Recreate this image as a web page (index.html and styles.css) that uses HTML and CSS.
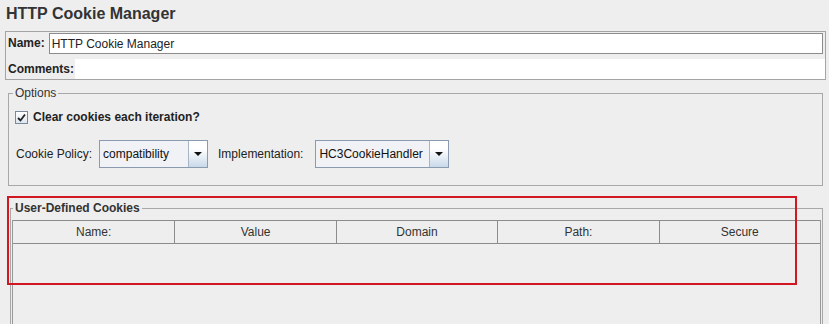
FILE: index.html
```html
<!DOCTYPE html>
<html lang="en">

<head>
  <meta charset="UTF-8">
  <meta name="viewport" content="width=device-width, initial-scale=1.0">
  <title>HTTP Cookie Manager</title>
  <link rel="stylesheet" href="styles.css">
</head>

<body>
  <h1 class="title">HTTP Cookie Manager</h1>

  <div class="name-panel">
    <div class="row">
      <label class="bold-label" for="name">Name:</label>
      <input type="text" id="name" class="name-input" value="HTTP Cookie Manager">
    </div>
    <div class="row comments-row">
      <label class="bold-label" for="comments">Comments:</label>
      <div id="comments" class="comments-field"></div>
    </div>
  </div>

  <fieldset class="group options">
    <legend>Options</legend>
    <label class="check">
      <span class="check-box">
        <svg width="9" height="9" viewBox="0 0 9 9">
          <path d="M1 5 L3.5 7.5 L8 1.5" fill="none" stroke="#222" stroke-width="1.8" />
        </svg>
      </span>
      Clear cookies each iteration?
    </label>

    <div class="combo-row">
      <span class="plain-label">Cookie Policy:</span>
      <div class="combo policy">
        <span class="combo-text">compatibility</span>
        <span class="combo-arrow"></span>
      </div>
      <span class="plain-label impl-label">Implementation:</span>
      <div class="combo impl">
        <span class="combo-text">HC3CookieHandler</span>
        <span class="combo-arrow"></span>
      </div>
    </div>
  </fieldset>

  <fieldset class="group cookies">
    <legend class="bold-legend">User-Defined Cookies</legend>
    <div class="cookie-table">
      <div class="table-head">
        <div class="th">Name:</div>
        <div class="th">Value</div>
        <div class="th">Domain</div>
        <div class="th">Path:</div>
        <div class="th">Secure</div>
      </div>
      <div class="table-body"></div>
    </div>
  </fieldset>

  <!-- red annotation box -->
  <div class="highlight"></div>
</body>

</html>
```

FILE: styles.css
```css
body {
  font-family: "Liberation Sans", Arial, sans-serif;
  font-size: 12px;
  color: #222;
  background-color: #eeeeee;
  margin: 0;
  padding: 0;
  height: 324px;
  overflow: hidden;
  position: relative;
}

.title {
  margin: 0;
  padding: 4px 6px 7px;
  font-size: 16px;
  line-height: 20px;
  font-weight: bold;
  color: #333;
}

.name-panel {
  margin: 0 3px 0 5px;
  border: 1px solid #a4a4a4;
}

.row {
  display: flex;
  align-items: center;
}

.bold-label {
  font-weight: bold;
  padding-left: 2px;
}

.name-input {
  flex: 1;
  height: 21px;
  box-sizing: border-box;
  margin: 1px 2px 0 4px;
  padding: 0 2px;
  border: 1px solid #8c8c8c;
  background: #fff;
  font-family: inherit;
  font-size: 12px;
  color: #222;
  outline: none;
}

.comments-row {
  margin-top: 5px;
}

.comments-field {
  flex: 1;
  height: 20px;
  background: #fff;
  margin-left: 1px;
}

.group {
  border: 1px solid #a8a8a8;
  padding: 0 0 0 4px;
  min-width: 0;
}

.group legend {
  padding: 0 2px;
  line-height: 14px;
  color: #333;
}

.bold-legend {
  font-weight: bold;
}

.options {
  margin: 6px 6px 0 8px;
  padding-bottom: 17px;
}

.check {
  display: flex;
  align-items: center;
  gap: 5px;
  margin: 10px 0 0 2px;
  font-weight: bold;
}

.check-box {
  width: 11px;
  height: 11px;
  border: 1px solid #7a8a99;
  background: linear-gradient(#ffffff, #dce6f0);
  display: flex;
  align-items: center;
  justify-content: center;
}

.combo-row {
  display: flex;
  align-items: center;
  margin: 16px 0 0 3px;
}

.plain-label {
  margin-right: 7px;
}

.impl-label {
  margin-right: 12px;
}

.combo {
  display: flex;
  height: 28px;
  box-sizing: border-box;
  border: 1px solid #8a9bb0;
  background: #f0f2f5;
  margin-right: 10px;
}

.policy {
  width: 109px;
}

.impl {
  width: 134px;
}

.combo-text {
  flex: 1;
  padding-left: 3px;
  line-height: 26px;
  color: #111;
}

.combo-arrow {
  width: 18px;
  border-left: 1px solid #a6b4c4;
  background: linear-gradient(#ffffff 30%, #c9d9ea);
  position: relative;
}

.combo-arrow::after {
  content: "";
  position: absolute;
  left: 5px;
  top: 11px;
  border-left: 4px solid transparent;
  border-right: 4px solid transparent;
  border-top: 4px solid #111;
}

.cookies {
  margin: 15px 6px 0 10px;
  padding: 0;
  height: 200px;
}

.cookies legend {
  margin-left: 2px;
}

.cookie-table {
  margin: 5px 1px 0;
  height: 100%;
  border-left: 1px solid #999;
  border-right: 1px solid #999;
}

.table-head {
  display: grid;
  grid-template-columns: repeat(5, 1fr);
  border-top: 1px solid #8c8c8c;
  border-bottom: 1px solid #8c8c8c;
  background: #eeeeee;
}

.th {
  height: 22px;
  line-height: 22px;
  text-align: center;
  color: #333;
  border-left: 1px solid #8c8c8c;
}

.th:first-child {
  border-left: none;
}

.table-body {
  height: 100%;
}

.highlight {
  position: absolute;
  left: 7px;
  top: 196px;
  width: 786px;
  height: 85px;
  border: 2px solid #d01722;
}
```
